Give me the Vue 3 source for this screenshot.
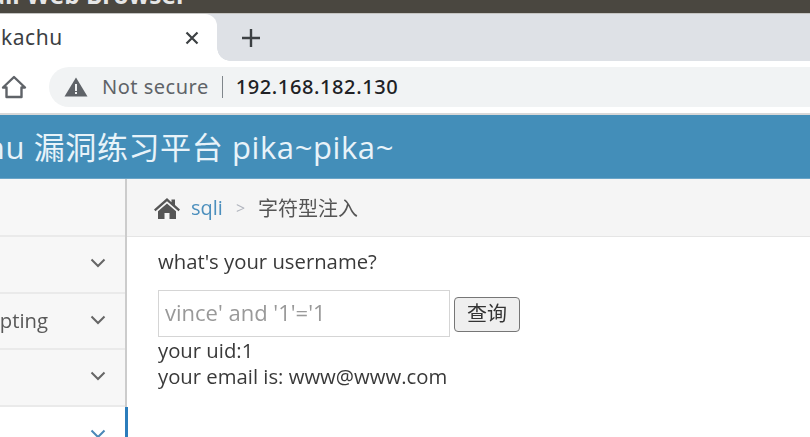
<template>
  <div class="screen">
    <div class="os-bar"><span class="os-title">Kali Web Browser</span></div>

    <div class="tab-strip">
      <div class="tab">
        <span class="tab-title">Pikachu</span>
        <svg class="tab-close" width="14" height="14" viewBox="0 0 14 14">
          <path d="M1.500 1.500l11 11M12.500 1.500l-11 11" stroke="#3c4043" stroke-width="2.200" fill="none" />
        </svg>
      </div>
      <svg class="new-tab" width="20" height="20" viewBox="0 0 20 20">
        <path d="M10 1v18M1 10h18" stroke="#3c4043" stroke-width="2.400" fill="none" />
      </svg>
    </div>

    <div class="toolbar">
      <svg class="home" width="26" height="24" viewBox="0 0 26 24">
        <path d="M2 12.500L13 2l11 10.500h-3.500V22h-15v-9.500z" fill="none" stroke="#5f6368" stroke-width="2.400" stroke-linejoin="round" />
      </svg>
      <div class="omnibox">
        <svg width="24" height="20" viewBox="0 0 24 20">
          <path d="M12 0.500L23.500 19.500H0.500z" fill="#5f6368" />
          <path d="M11 7h2v7h-2zM11 15h2v2h-2z" fill="#f1f3f4" />
        </svg>
        <span class="not-secure">Not secure</span>
        <span class="divider"></span>
        <span class="url">192.168.182.130</span>
      </div>
    </div>

    <header class="site-head">
      <span class="site-title">Pikachu 漏洞练习平台 pika~pika~</span>
    </header>

    <div class="body">
      <aside class="sidebar">
        <div class="side-top"></div>
        <div v-for="item in items" :key="item.name" class="side-item" :class="{ active: item.active }">
          <span class="side-label"><span>{{ item.name }}</span></span>
          <svg class="chev" width="16" height="10" viewBox="0 0 16 10">
            <path d="M1.500 1.500L8 8l6.500-6.500" fill="none" :stroke="item.active ? '#4b88b7' : '#666'" stroke-width="2" />
          </svg>
        </div>
      </aside>

      <main class="content">
        <nav class="crumbs">
          <svg width="28" height="22" viewBox="0 0 28 22">
            <path d="M14 1L1 12.500l1.500 1.700L14 4.300l11.500 9.900 1.500-1.700-5-4.400V2.500h-3.500v2.700z" fill="#555" />
            <path d="M14 6.500L5 14.300V22h6.500v-6h5v6H23v-7.700z" fill="#555" />
          </svg>
          <a class="crumb-link">sqli</a>
          <span class="crumb-sep">&gt;</span>
          <span class="crumb-now">字符型注入</span>
        </nav>
        <div class="page">
          <p class="ask">what's your username?</p>
          <form class="query" @submit.prevent>
            <input class="name-input" type="text" placeholder="vince' and '1'='1" />
            <button class="query-btn" type="submit">查询</button>
          </form>
          <p class="line">your uid:1</p>
          <p class="line">your email is: www@www.com</p>
        </div>
      </main>
    </div>
  </div>
</template>

<script setup>
const items = [
  { name: "Burt Force" },
  { name: "Cross-Site Scripting" },
  { name: "CSRF" },
  { name: "SQL-Inject", active: true },
];
</script>

<style>
html,
body {
  margin: 0;
  overflow: hidden;
  background: #fff;
}
</style>

<style scoped>
.screen {
  width: 810px;
  height: 437px;
  overflow: hidden;
  font-family: "Open Sans", "Noto Sans CJK SC", sans-serif;
  filter: blur(0.6px);
}
.os-bar {
  height: 13px;
  background: #4a4740;
  overflow: hidden;
}
.os-title {
  display: block;
  margin: -17px 0 0 -26px;
  font-size: 24.400px;
  font-weight: 700;
  line-height: 24px;
  color: #e6e6e6;
  white-space: nowrap;
}
.tab-strip {
  height: 48px;
  background: #dee1e6;
  display: flex;
  align-items: center;
  gap: 24px;
  border-top: 1px solid #c4c4c2;
  box-sizing: border-box;
}
.tab {
  width: 217px;
  height: 100%;
  box-sizing: border-box;
  background: #fff;
  border-radius: 0 12px 0 0;
  display: flex;
  align-items: center;
  justify-content: space-between;
  padding-right: 18px;
  position: relative;
}
.tab::after {
  content: "";
  position: absolute;
  left: 100%;
  bottom: 0;
  width: 13px;
  height: 13px;
  background: radial-gradient(circle at 100% 0, transparent 12.500px, #fff 13px);
}
.tab-title {
  margin: -2px 0 0 -18px;
  font-size: 21px;
  letter-spacing: 0.5px;
  color: #3c4043;
  font-family: "Noto Sans", sans-serif;
}
.new-tab {
  flex: none;
}
.toolbar {
  height: 54px;
  background: #fff;
  display: flex;
  align-items: center;
  gap: 22px;
  padding-left: 1px;
  border-bottom: 2px solid #d8d8d8;
  box-sizing: border-box;
}
.home {
  flex: none;
}
.omnibox {
  flex: 1;
  height: 40px;
  background: #f1f3f4;
  border-radius: 20px 0 0 20px;
  display: flex;
  align-items: center;
  padding-left: 15px;
  font-family: "Noto Sans", sans-serif;
  font-size: 20px;
}
.not-secure {
  margin: -2px 0 0 14px;
  letter-spacing: 0.5px;
  color: #5f6368;
}
.divider {
  width: 1px;
  height: 22px;
  background: #80868b;
  margin: 0 14px 0 13px;
}
.url {
  margin: -2px 0 0 -1px;
  color: #202124;
  font-weight: 500;
  letter-spacing: 0.6px;
}
.site-head {
  height: 64px;
  padding-bottom: 3px;
  background: #438eb9;
  display: flex;
  align-items: center;
  box-sizing: border-box;
  border-bottom: 1px solid #6aa5c8;
  overflow: hidden;
}
.site-title {
  margin-left: -92px;
  font-size: 31px;
  letter-spacing: 0.6px;
  color: #e8f3f9;
  white-space: nowrap;
}
.body {
  display: flex;
  height: 258px;
}
.sidebar {
  width: 127px;
  flex: none;
  background: #f7f7f7;
  border-right: 2px solid #ccc;
  box-sizing: border-box;
}
.side-top {
  height: 58px;
  box-sizing: border-box;
  border-bottom: 2px solid #eaeaea;
}
.side-item {
  height: 56.700px;
  box-sizing: border-box;
  display: flex;
  align-items: center;
  justify-content: space-between;
  padding-right: 19px;
  padding-bottom: 3px;
  border-bottom: 2px solid #eaeaea;
  font-size: 20.300px;
  color: #585858;
  position: relative;
}
.side-item.active {
  background: #fff;
  border-bottom: 0;
}
.side-item.active::after {
  content: "";
  position: absolute;
  top: 0;
  bottom: -10px;
  right: -3px;
  width: 3px;
  background: #2b7dbc;
}
.side-label {
  width: 48px;
  display: flex;
  justify-content: flex-end;
  white-space: nowrap;
}
.side-item:not(:nth-child(3)) .side-label span {
  visibility: hidden;
}
.content {
  flex: 1;
  min-width: 0;
}
.crumbs {
  height: 58px;
  box-sizing: border-box;
  background: #f5f5f5;
  border-bottom: 1px solid #e5e5e5;
  display: flex;
  align-items: center;
  padding-left: 26px;
  font-size: 20px;
}
.crumb-link {
  margin-left: 10px;
  color: #4c8fbd;
}
.crumb-sep {
  margin: 0 13px;
  color: #b2b6bf;
  font-size: 16px;
}
.crumb-now {
  color: #555;
}
.page {
  padding: 11px 0 0 31px;
  color: #393939;
  font-size: 20.300px;
  line-height: 26.500px;
}
.ask,
.line {
  margin: 0;
  white-space: nowrap;
}
.query {
  display: flex;
  align-items: center;
  gap: 4px;
  margin-top: 15px;
}
.name-input {
  width: 292px;
  height: 47px;
  box-sizing: border-box;
  border: 1.500px solid #d5d5d5;
  padding: 0 6px 2px;
  font: inherit;
  font-size: 22px;
  outline: none;
}
.name-input::placeholder {
  color: #999;
  opacity: 1;
}
.query-btn {
  width: 66px;
  height: 35px;
  margin-top: 2px;
  box-sizing: border-box;
  border: 1.500px solid #767676;
  border-radius: 4px;
  background: #efefef;
  color: #333;
  font: inherit;
  font-size: 20px;
  padding: 0;
}
</style>
